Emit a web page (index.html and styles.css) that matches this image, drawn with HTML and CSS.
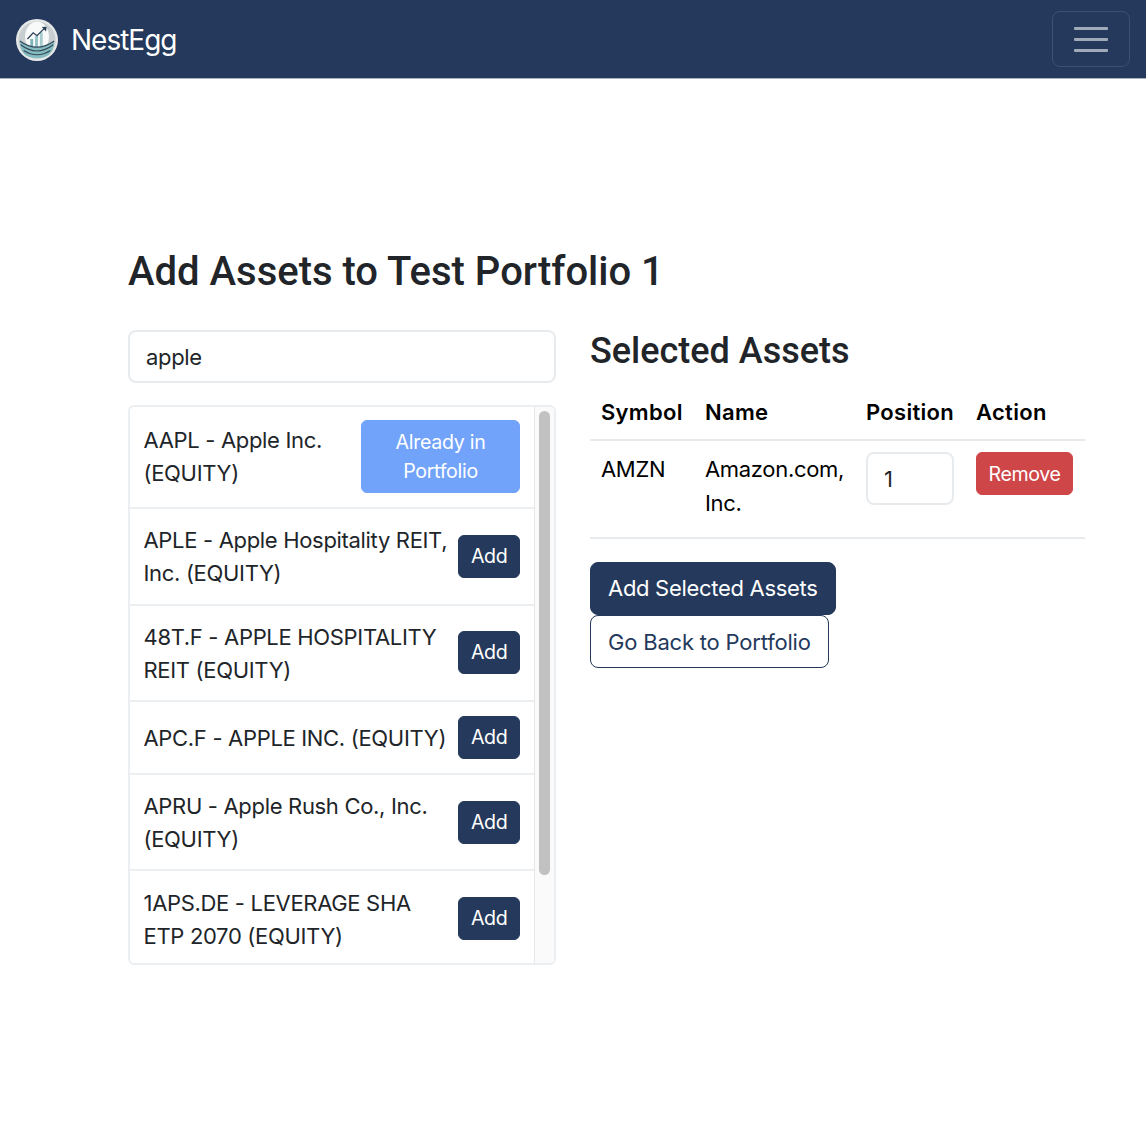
FILE: index.html
```html
<!DOCTYPE html>
<html lang="en">
<head>
<meta charset="utf-8">
<title>NestEgg</title>
<link rel="stylesheet" href="styles.css">
</head>
<body>
<nav class="navbar">
  <a class="brand">
    <svg class="logo" viewBox="0 0 44 44" width="42" height="42">
      <circle cx="22" cy="22" r="22" fill="#e6e8e8"/>
      <circle cx="22" cy="22" r="19.5" fill="#c9cfd1"/>
      <ellipse cx="22" cy="18.5" rx="12.5" ry="15.5" fill="#f8fafa"/>
      <rect x="15" y="21" width="3" height="11" fill="#7db4bb"/>
      <rect x="20" y="18" width="3" height="14" fill="#8fc0c5"/>
      <rect x="25" y="14" width="3" height="18" fill="#a6ccd0"/>
      <path d="M12 21 L18 14.5 L22 17.5 L30 9.5" fill="none" stroke="#2a3f55" stroke-width="1.3"/>
      <path d="M27 8.5 L32 8 L31.5 13 Z" fill="#2a3f55"/>
      <path d="M4 23 Q22 36 40 23 Q40 41 22 41 Q4 41 4 23 Z" fill="#84bcc0"/>
      <path d="M4 23 Q22 36 40 23 M5 27 Q22 40 39 27 M8 33 Q22 42 36 33" fill="none" stroke="#33485a" stroke-width="1.1"/>
    </svg>
    <span class="brand-name">NestEgg</span>
  </a>
  <button class="toggler" type="button" aria-label="Toggle navigation">
    <span class="bar"></span><span class="bar"></span><span class="bar"></span>
  </button>
</nav>
<main class="container">
  <h1 class="title">Add Assets to Test Portfolio 1</h1>
  <div class="columns">
    <section class="left">
      <input class="control search" type="text" value="apple">
      <div class="results">
        <ul class="list">
          <li class="item"><span class="label">AAPL - Apple Inc. (EQUITY)</span><button class="btn small disabled wide">Already in Portfolio</button></li>
          <li class="item"><span class="label">APLE - Apple Hospitality REIT, Inc. (EQUITY)</span><button class="btn small dark">Add</button></li>
          <li class="item"><span class="label">48T.F - APPLE HOSPITALITY REIT (EQUITY)</span><button class="btn small dark">Add</button></li>
          <li class="item"><span class="label">APC.F - APPLE INC. (EQUITY)</span><button class="btn small dark">Add</button></li>
          <li class="item"><span class="label">APRU - Apple Rush Co., Inc. (EQUITY)</span><button class="btn small dark">Add</button></li>
          <li class="item"><span class="label">1APS.DE - LEVERAGE SHA ETP 2070 (EQUITY)</span><button class="btn small dark">Add</button></li>
        </ul>
        <div class="track"><div class="thumb"></div></div>
      </div>
    </section>
    <section class="right">
      <h2 class="subtitle">Selected Assets</h2>
      <table class="table">
        <thead>
          <tr><th class="c1">Symbol</th><th class="c2">Name</th><th class="c3">Position</th><th class="c4">Action</th></tr>
        </thead>
        <tbody>
          <tr>
            <td>AMZN</td>
            <td>Amazon.com, Inc.</td>
            <td><input class="control position" type="text" value="1"></td>
            <td><button class="btn small danger">Remove</button></td>
          </tr>
        </tbody>
      </table>
      <div class="actions">
        <button class="btn large dark">Add Selected Assets</button>
        <button class="btn large outline">Go Back to Portfolio</button>
      </div>
    </section>
  </div>
</main>
</body>
</html>
```
FILE: styles.css
```css
* { box-sizing: border-box; }
html, body { margin: 0; padding: 0; }
body {
  font-family: Inter, "Liberation Sans", sans-serif;
  font-size: 22px;
  line-height: 33px;
  letter-spacing: -0.32px;
  color: #212529;
  background: #fff;
}
.navbar {
  height: 79px;
  background: #24395b;
  border-bottom: 1px solid #a9b2bf;
  display: flex;
  align-items: center;
  justify-content: space-between;
  padding: 0 16px;
}
.brand { display: flex; align-items: center; gap: 13px; margin-top: 2px; }
.logo { display: block; flex: none; }
.brand-name {
  color: #fff;
  font-size: 28px;
  line-height: 40px;
  letter-spacing: -1px;
}
.toggler {
  width: 78px;
  height: 56px;
  background: transparent;
  border: 1px solid #3d506f;
  border-radius: 8px;
  display: flex;
  flex-direction: column;
  align-items: center;
  justify-content: center;
  gap: 8px;
  padding: 0;
}
.bar { display: block; width: 34px; height: 3px; border-radius: 1px; background: #a1aab8; }
.container { padding: 169px 61px 0 128px; }
.title {
  font-family: Roboto, sans-serif;
  font-weight: 500;
  font-size: 40px;
  line-height: 48px;
  letter-spacing: 0;
  margin: 0 0 34px;
}
.columns { display: flex; gap: 34px; align-items: flex-start; }
.left { width: 428px; flex: none; }
.right { flex: 1; min-width: 0; }
.control {
  font: inherit;
  letter-spacing: -0.32px;
  color: #212529;
  background: #fff;
  border: 2px solid #e8ebee;
  border-radius: 8px;
  outline: none;
  display: block;
}
.search { width: 100%; height: 53px; padding: 0 16px; margin-bottom: 22px; }
.results {
  display: flex;
  height: 560px;
  border: 2px solid #eceff2;
  border-radius: 6px;
  overflow: hidden;
}
.list { flex: 1; min-width: 0; margin: 0; padding: 0; list-style: none; }
.item {
  display: flex;
  align-items: center;
  justify-content: space-between;
  gap: 6px;
  padding: 13.2px 14px 13.2px 13.5px;
  border-bottom: 2px solid #eceff2;
  min-height: 73px;
}
.item:first-child { padding-bottom: 14px; }
.item:last-child { border-bottom: 0; }
.label { flex: 1; min-width: 0; padding-top: 2px; }
.item:first-child .label { padding-top: 0; }
.track {
  width: 20px;
  flex: none;
  background: #fafafa;
  border-left: 1px solid #e8e8e8;
  padding: 4px 4px 0 4px;
}
.thumb { height: 464px; background: #c1c1c1; border-radius: 6px; }
.btn {
  font-family: Inter, "Liberation Sans", sans-serif;
  letter-spacing: -0.3px;
  border-radius: 6px;
  border: 1px solid transparent;
  cursor: pointer;
  display: block;
}
.small { font-size: 19.6px; line-height: 29px; padding: 6px 11.5px; }
.wide { width: 159px; flex: none; margin-left: 4px; }
.large { font-size: 22px; line-height: 33px; padding: 9px 17px; border-radius: 8px; }
.dark { background: #24395b; color: #fff; border-color: #24395b; flex: none; }
.disabled { background: #72a3fa; color: #fff; border-color: #72a3fa; padding: 6.5px 12px; }
.danger { background: #cf4649; color: #fff; border-color: #cf4649; letter-spacing: -0.4px; padding-top: 7px; padding-bottom: 5px; }
.outline { background: #fff; color: #24395b; border-color: #24395b; letter-spacing: -0.2px; padding-top: 10px; padding-bottom: 8px; }
.subtitle {
  font-family: Roboto, sans-serif;
  font-weight: 500;
  font-size: 36px;
  line-height: 42px;
  letter-spacing: 0;
  margin: 0 0 13px;
}
.table { width: 495px; border-collapse: collapse; table-layout: fixed; color: #000; }
.table th, .table td { padding: 12px 11px 17px; line-height: 33.6px; text-align: left; vertical-align: top; border-bottom: 2px solid #e8ebee; }
.table th { font-weight: 600; letter-spacing: 0.3px; padding: 11px 11px 10px; line-height: 33px; }
.table td .btn, .table td .control { margin-top: -1px; }
.c1 { width: 104px; }
.c2 { width: 161px; }
.c3 { width: 110px; }
.position { width: 88px; height: 53px; padding: 0 16px; color: #212529; }
.actions { margin-top: 23px; display: flex; flex-direction: column; align-items: flex-start; }
```
